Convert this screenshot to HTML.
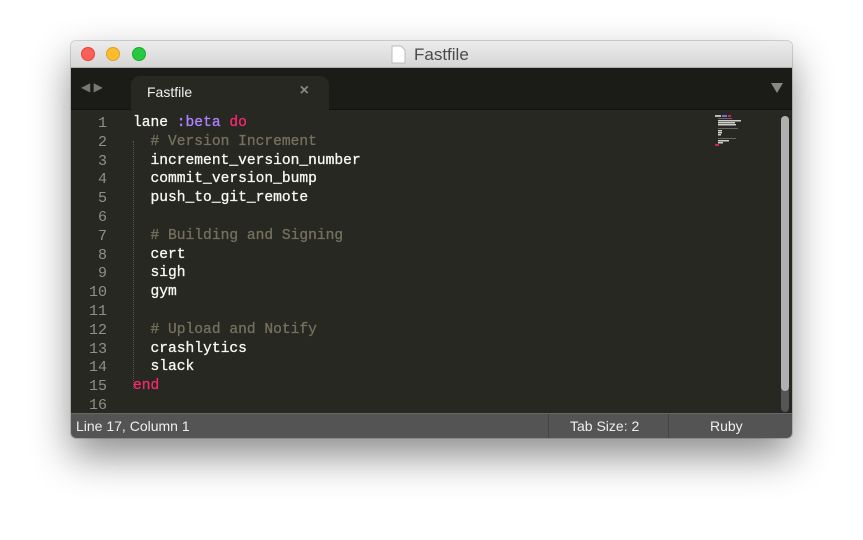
<!DOCTYPE html>
<html><head><style>
*{margin:0;padding:0;box-sizing:border-box}
body{width:863px;height:540px;background:#fff;position:relative;overflow:hidden;font-family:"Liberation Sans",sans-serif}
.win{position:absolute;left:71px;top:41px;width:721px;height:397px;border-radius:5px;overflow:hidden;box-shadow:0 18px 40px rgba(0,0,0,.45),0 0 0 1px rgba(0,0,0,.15)}
.title{position:absolute;left:0;top:0;width:100%;height:27px;background:linear-gradient(#ececec,#d6d6d6);border-bottom:1px solid #b0b0b0}
.dot{position:absolute;top:6px;width:14px;height:14px;border-radius:50%}
.ttl{position:absolute;left:343px;top:4px;font-size:17px;color:#4a4a4a}
.tabbar{position:absolute;left:0;top:27px;width:100%;height:42px;background:#1b1b18;border-bottom:1px solid #111}
.tab{position:absolute;left:60px;top:8px;width:198px;height:35px;background:#272822;border-radius:9px 9px 0 0}
.tab span{position:absolute;left:16px;top:8px;color:#f0f0f0;font-size:14px}
.tab b{position:absolute;right:20px;top:6px;color:#888;font-size:16px}
.ed{position:absolute;left:0;top:69px;width:100%;height:303px;background:#272822}
.ln{position:absolute;left:0;width:36px;text-align:right;color:#8f908a;font-family:"Liberation Mono",monospace;font-size:15px}
.cd{position:absolute;left:62px;font-family:"Liberation Mono",monospace;font-size:14.6px;color:#f8f8f2;white-space:pre;-webkit-text-stroke:0.3px currentColor}
.c{color:#75715e}.k{color:#f92672}.s{color:#ae81ff}
.guide{position:absolute;left:62px;top:31px;width:1px;height:248px;border-left:1px dotted #555}
.sb{position:absolute;left:710px;top:6px;width:8px;height:296px;background:#555;border-radius:4px}
.sb i{position:absolute;left:0;top:0;width:8px;height:275px;background:#b0b0b0;border-radius:4px}
.status{position:absolute;left:0;top:372px;width:100%;height:25px;background:#545454;border-top:1px solid #666;color:#eee;font-size:14px}
.status span{position:absolute;top:4px}
.sep{position:absolute;top:0;width:1px;height:25px;background:#444}
</style></head><body>
<div class="win">
 <div class="title">
  <div class="dot" style="left:10px;background:#fc5f57;border:1px solid #e0443e"></div>
  <div class="dot" style="left:35px;background:#fdbc2e;border:1px solid #dea123"></div>
  <div class="dot" style="left:61px;background:#28c840;border:1px solid #1aab29"></div>
  <svg style="position:absolute;left:320px;top:4px" width="15" height="19"><path d="M1 1h9l4 4v13H1z" fill="#fff" stroke="#bbb"/></svg>
  <div class="ttl">Fastfile</div>
 </div>
 <div class="tabbar">
  <div style="position:absolute;left:10px;top:12px;color:#777;font-size:12px">◀ ▶</div>
  <div class="tab"><span>Fastfile</span><b>×</b></div>
  <div style="position:absolute;left:700px;top:15px;width:0;height:0;border-left:6px solid transparent;border-right:6px solid transparent;border-top:10px solid #888"></div>
 </div>
 <div class="ed">
  <div class="guide"></div>
  <div id="code"></div>
  <div class="sb"><i></i></div>
  <svg style="position:absolute;left:644px;top:4px" width="40" height="40">
   <rect x="0" y="1" width="6" height="2" fill="#bbb"/><rect x="7" y="1" width="5" height="2" fill="#8866dd"/><rect x="13" y="1" width="3" height="2" fill="#d02060"/>
   <rect x="3" y="4" width="14" height="1" fill="#666"/><rect x="3" y="6" width="23" height="1.5" fill="#ccc"/><rect x="3" y="8" width="17" height="1.5" fill="#ccc"/><rect x="3" y="10" width="18" height="1.5" fill="#ccc"/>
   <rect x="3" y="14" width="20" height="1" fill="#666"/><rect x="3" y="16" width="4" height="1.5" fill="#ccc"/><rect x="3" y="18" width="4" height="1.5" fill="#ccc"/><rect x="3" y="20" width="3" height="1.5" fill="#ccc"/>
   <rect x="3" y="24" width="18" height="1" fill="#666"/><rect x="3" y="26" width="11" height="1.5" fill="#ccc"/><rect x="3" y="28" width="5" height="1.5" fill="#ccc"/><rect x="0" y="30" width="4" height="2" fill="#d02060"/>
  </svg>
 </div>
 <div class="status">
  <span style="left:5px">Line 17, Column 1</span>
  <div class="sep" style="left:477px"></div>
  <span style="left:499px">Tab Size: 2</span>
  <div class="sep" style="left:597px"></div>
  <span style="left:639px">Ruby</span>
 </div>
</div>
<script>
var L=['lane <span class="s">:beta</span> <span class="k">do</span>','  <span class="c"># Version Increment</span>','  increment_version_number','  commit_version_bump','  push_to_git_remote','','  <span class="c"># Building and Signing</span>','  cert','  sigh','  gym','','  <span class="c"># Upload and Notify</span>','  crashlytics','  slack','<span class="k">end</span>',''];
var h='';for(var i=0;i<16;i++){var t=5+i*18.8;h+='<div class="ln" style="top:'+t+'px">'+(i+1)+'</div><div class="cd" style="top:'+t+'px">'+L[i]+'</div>';}
document.getElementById('code').innerHTML=h;
</script>
</body></html>
